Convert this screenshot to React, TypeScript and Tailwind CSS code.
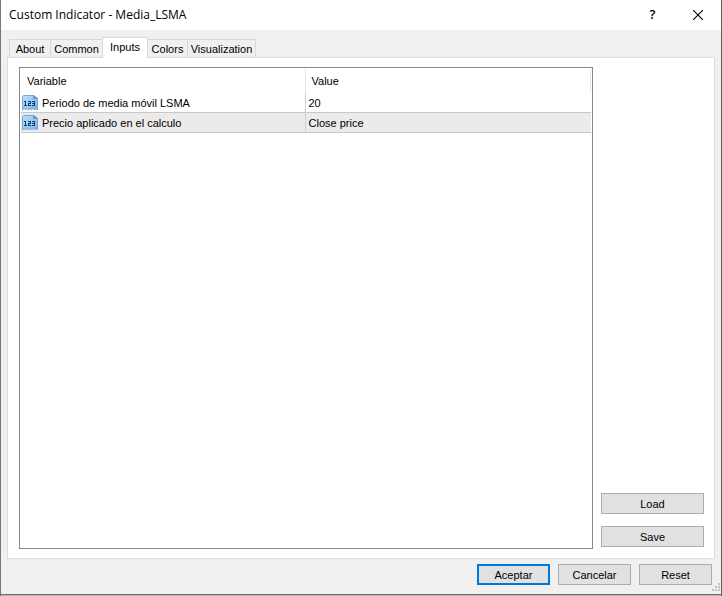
import React, { useState } from "react";

const tabs = [
  { name: "About", width: "w-[42px]" },
  { name: "Common", width: "w-[53px]" },
  { name: "Inputs", width: "w-[46px]" },
  { name: "Colors", width: "w-[41px]" },
  { name: "Visualization", width: "w-[69px]" },
];

const rows = [
  { variable: "Periodo de media móvil LSMA", value: "20" },
  { variable: "Precio aplicado en el calculo", value: "Close price" },
];

function NumberIcon() {
  return (
    <svg width="16" height="16" viewBox="0 0 16 16" className="block shrink-0" aria-hidden="true">
      <defs>
        <linearGradient id="sheet" x1="0" y1="0" x2="1" y2="1">
          <stop offset="0" stopColor="#bfdffa" />
          <stop offset="0.5" stopColor="#9ccaf3" />
          <stop offset="1" stopColor="#74b0e8" />
        </linearGradient>
      </defs>
      <path
        d="M.5 1.5 1.5.5H11.5L15.5 3.5V15L14 13.5L12.5 15L11 13.3L9.5 15L8 13.3L6.5 15L5 13.3L3.5 15L2.3 13.5L.5 15Z"
        fill="url(#sheet)"
        stroke="#76a7d6"
        strokeWidth="1"
      />
      <path d="M11.5.5V3.5H15.5Z" fill="#6aa3dc" stroke="#5489bf" strokeWidth=".7" />
      <path
        d="M2 6h2v4h1v1H2v-1h1V7H2zM6 6h3v3H7v1h2v1H6V8h2V7H6zM10 6h3v5h-3v-1h2V9h-2V8h2V7h-2z"
        fill="#173d69"
        shapeRendering="crispEdges"
      />
    </svg>
  );
}

function PushButton({ children, className }: { children: React.ReactNode; className: string }) {
  return (
    <button
      type="button"
      className={`flex h-[21px] items-center justify-center bg-[#e1e1e1] pt-px leading-4 ${className}`}
    >
      {children}
    </button>
  );
}

export default function App() {
  const [active, setActive] = useState("Inputs");
  return (
    <div className="flex min-h-screen flex-col border-r border-l border-r-[#606060] border-l-[#777777] bg-[#f0f0f0] font-['Liberation_Sans',Arial,sans-serif] text-[11px] text-black">
      <header className="flex h-[30px] items-center justify-between bg-white pl-2">
        <h1 className="font-['Open_Sans','Noto_Sans',sans-serif] text-[12px] leading-4">
          Custom Indicator - Media_LSMA
        </h1>
        <div className="flex h-full">
          <button
            type="button"
            aria-label="Help"
            className="flex w-[45px] items-center justify-center font-['Open_Sans',sans-serif] text-[13px] font-semibold"
          >
            ?
          </button>
          <button type="button" aria-label="Close" className="flex w-[46px] items-center justify-center">
            <svg width="10" height="10" viewBox="0 0 10 10" aria-hidden="true">
              <path d="M0 0 10 10M10 0 0 10" stroke="#000" strokeWidth="1.1" />
            </svg>
          </button>
        </div>
      </header>

      <main className="flex flex-1 flex-col px-1.5 pt-[7px]">
        <div role="tablist" className="flex items-end pl-0.5">
          {tabs.map((tab) => (
            <button
              key={tab.name}
              type="button"
              role="tab"
              aria-selected={active === tab.name}
              onClick={() => setActive(tab.name)}
              className={`${tab.width} -mr-px flex justify-center border border-b-0 border-[#d9d9d9] pt-px leading-4 ${
                active === tab.name ? "relative z-10 -mb-px h-[21px] bg-white" : "h-[18px]"
              }`}
            >
              {tab.name}
            </button>
          ))}
        </div>

        <section className="flex flex-1 gap-2 border border-[#dcdcdc] bg-white pt-[9px] pr-2.5 pb-[9px] pl-[11px]">
          <div className="flex-1 border border-[#828790] p-px">
            <table className="w-full table-fixed border-collapse text-left">
              <colgroup>
                <col className="w-[284px]" />
                <col />
              </colgroup>
              <thead>
                <tr className="h-[23px]">
                  <th className="border-r border-[#e5e5e5] pt-0.5 pl-1.5 font-normal">Variable</th>
                  <th className="border-r border-[#e5e5e5] pt-0.5 pl-1.5 font-normal">Value</th>
                </tr>
              </thead>
              <tbody>
                {rows.map((row, index) => (
                  <tr
                    key={row.variable}
                    className={`h-5 ${index === 1 ? "border-y border-[#c8c8c8] bg-[#ebebeb]" : ""}`}
                  >
                    <td className="border-r border-[#d0d0d0] pt-0.5 pl-px">
                      <div className="flex items-center gap-1 leading-4">
                        <NumberIcon />
                        {row.variable}
                      </div>
                    </td>
                    <td className="pt-0.5 pl-[3px] leading-4">{row.value}</td>
                  </tr>
                ))}
              </tbody>
            </table>
          </div>
          <div className="flex w-[103px] flex-col justify-end gap-3 pb-0.5">
            <PushButton className="border border-[#adadad]">Load</PushButton>
            <PushButton className="border border-[#adadad]">Save</PushButton>
          </div>
        </section>
      </main>

      <footer className="flex h-[35px] items-start pt-[5px]">
        <div className="flex flex-1 justify-end gap-2">
          <PushButton className="w-[73px] border-2 border-[#0078d7]">Aceptar</PushButton>
          <PushButton className="w-[73px] border border-[#adadad]">Cancelar</PushButton>
          <PushButton className="w-[73px] border border-[#adadad]">Reset</PushButton>
        </div>
        <svg width="9" height="9" viewBox="0 0 9 9" className="mb-0.5 self-end" aria-hidden="true">
          <path d="M6 0h2v2H6zM3 3h2v2H3zM6 3h2v2H6zM0 6h2v2H0zM3 6h2v2H3zM6 6h2v2H6z" fill="#bfbfbf" />
        </svg>
      </footer>
      <div className="h-0.5 border-t border-[#707070] bg-[#b5b5b5]" />
    </div>
  );
}
